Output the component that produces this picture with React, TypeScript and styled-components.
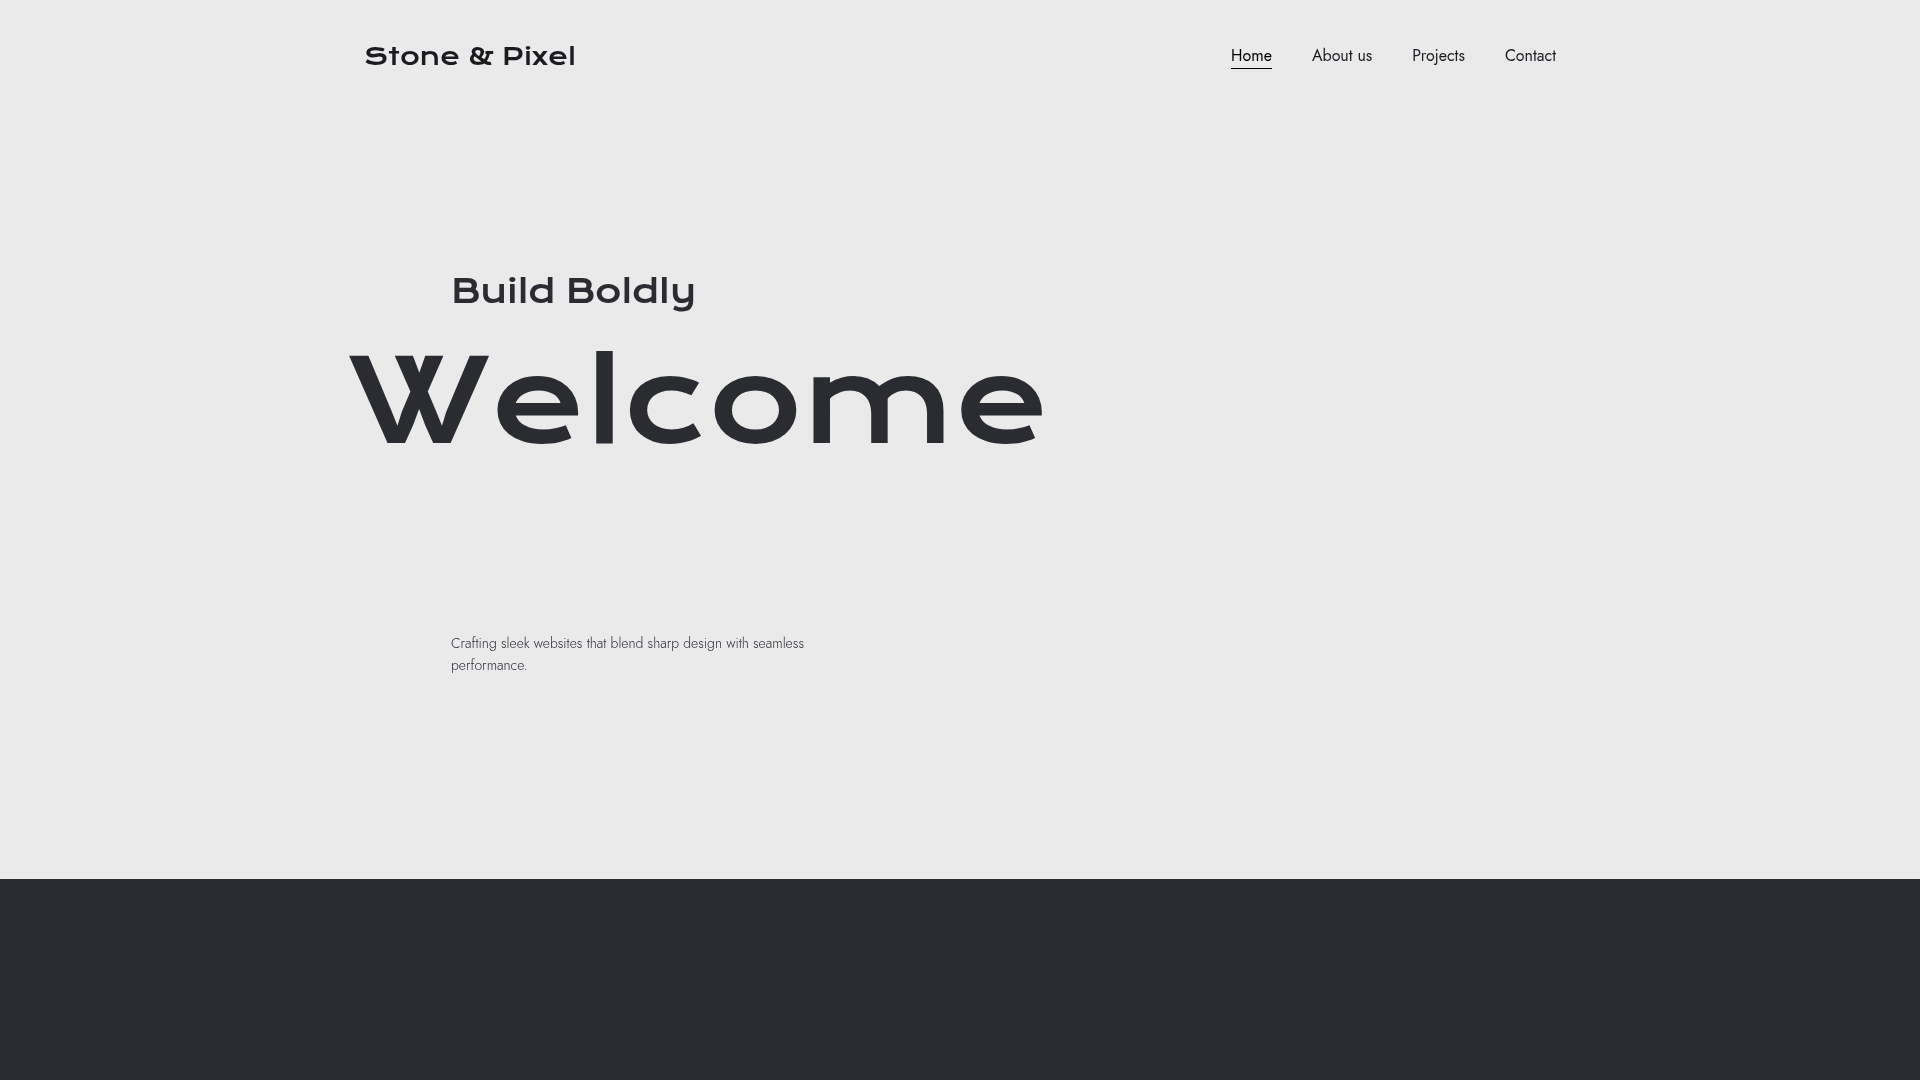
import React from "react";
import styled, { createGlobalStyle } from "styled-components";

const display = `"Krona One", "DejaVu Sans", sans-serif`;
const body = `Jost, Lato, sans-serif`;

const GlobalStyle = createGlobalStyle`
  *, *::before, *::after { box-sizing: border-box; }
  html { background: #2b2c31; }
  body { margin: 0; font-family: ${body}; color: #1b1c1e; }
  h1, h2, p, ul { margin: 0; padding: 0; }
`;

const Page = styled.div`
  min-height: 100vh;
  background: #2b2c31;
`;

const Top = styled.div`
  background: #eaeaea;
`;

const Header = styled.header`
  display: flex;
  align-items: center;
  justify-content: space-between;
  max-width: 1192px;
  height: 112px;
  margin: 0 auto;
  will-change: transform;
`;

const Logo = styled.a`
  font: 400 24px/32px ${display};
  color: #1b1c1e;
  text-decoration: none;
`;

const NavList = styled.ul`
  display: flex;
  gap: 40px;
  list-style: none;
`;

const NavLink = styled.a<{ $active?: boolean }>`
  display: block;
  font-size: 16px;
  line-height: 24px;
  color: ${(p) => (p.$active ? "#000000" : "#1b1c1e")};
  border-bottom: 1px solid ${(p) => (p.$active ? "#000000" : "transparent")};
  text-decoration: none;
`;

const Hero = styled.main`
  max-width: 1224px;
  margin: 0 auto;
  padding: 157px 0 203px;
  color: #2b2c31;
  will-change: transform;
`;

const Tagline = styled.h2`
  margin-left: 103px;
  font: 400 32px/44px ${display};
`;

const Title = styled.h1`
  margin-bottom: 141px;
  font: 400 114px/178px ${display};
`;

const Lead = styled.p`
  max-width: 372px;
  margin-left: 103px;
  font-size: 14px;
  font-weight: 300;
  line-height: 22px;
  color: #2b2c31;
`;

const links = ["Home", "About us", "Projects", "Contact"];

export default function App() {
  return (
    <Page>
      <GlobalStyle />
      <Top>
        <Header>
          <Logo href="#home">Stone &amp; Pixel</Logo>
          <nav aria-label="Main">
            <NavList>
              {links.map((label, i) => (
                <li key={label}>
                  <NavLink
                    href={`#${label.toLowerCase().replace(" ", "-")}`}
                    $active={i === 0}
                    aria-current={i === 0 ? "page" : undefined}
                  >
                    {label}
                  </NavLink>
                </li>
              ))}
            </NavList>
          </nav>
        </Header>
        <Hero>
          <Tagline>Build Boldly</Tagline>
          <Title>Welcome</Title>
          <Lead>
            Crafting sleek websites that blend sharp design with seamless
            performance.
          </Lead>
        </Hero>
      </Top>
    </Page>
  );
}
